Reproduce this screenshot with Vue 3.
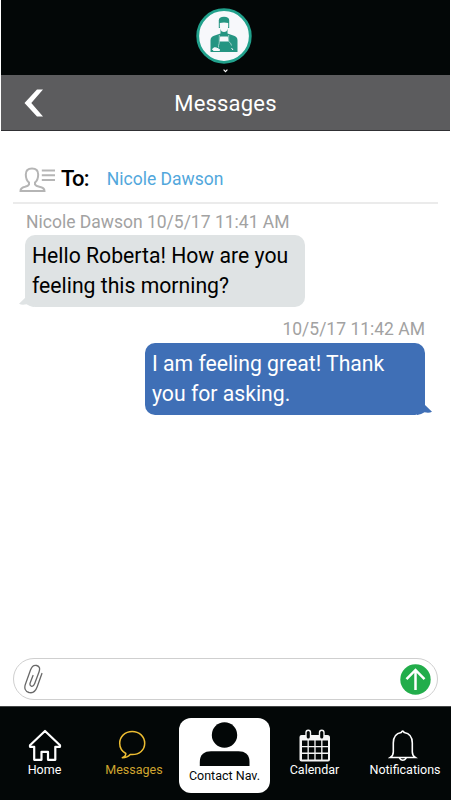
<!--
  MessagesScreen: one conversation thread with the recipient row,
  chat bubbles, the composer and the bottom tab bar.
-->
<script setup>
import { ref } from 'vue'

const recipient = 'Nicole Dawson'
const draft = ref('')

const messages = [
  { id: 1, mine: false, meta: 'Nicole Dawson 10/5/17 11:41 AM', lines: ['Hello Roberta! How are you', 'feeling this morning?'] },
  { id: 2, mine: true, meta: '10/5/17 11:42 AM', lines: ['I am feeling great! Thank', 'you for asking.'] },
]
</script>

<template>
  <div class="screen">
    <header class="top">
      <svg class="avatar" width="56" height="56" viewBox="0 0 56 56">
        <circle cx="28" cy="28" r="26.3" fill="#f7f8fb" stroke="#21a18c" stroke-width="2.8" />
        <path d="M14.500 44V32.500q0-3.500 3.500-4.700l6.500-2.300V20.500h7v5l6.500 2.300q3.500 1.200 3.500 4.700V44z" fill="#259582" />
        <path d="M22.800 20v-7.500q0-3.700 5.200-3.700t5.200 3.700V20z" fill="#259582" />
        <path d="M23.800 15q4.200-1.200 8.400 0v3.500q0 3-1.700 4.700-2.500 1.500-5 0-1.700-1.700-1.700-4.700z" fill="#f7f8fb" />
        <path d="M24.200 28.500h7.600l.7 5h-9z" fill="#f7f8fb" />
        <path d="M23.300 27v6.500q0 2-.8 4v2M32.700 27v6.500q2.500 1.500 2.800 4" fill="none" stroke="#b9ddd7" stroke-width=".8" />
        <path d="M16.500 41q1.500-2 4-1l3 1.500v1h-6zM35.500 40l1.500 2" fill="#f7f8fb" stroke="#f7f8fb" stroke-width="1" />
      </svg>
      <svg class="caret" width="5" height="4" viewBox="0 0 5 4">
        <path d="M.6.700l1.900 2L4.400.7" fill="none" stroke="#fff" stroke-width="1.100" />
      </svg>
    </header>

    <div class="title-bar">
      <svg class="back" width="21" height="28" viewBox="0 0 21 28">
        <path d="M14 .5H20L8.300 14 20 27.500H14L1.500 14z" fill="#fff" />
      </svg>
      <h1 class="title">Messages</h1>
    </div>

    <main class="thread">
      <div class="to-row">
        <svg class="contact" width="36" height="26" viewBox="0 0 36 26" fill="none" stroke="#b5b5b5" stroke-width="2">
          <path d="M10 17.500v-2C7.500 13.500 6.800 10.500 6.800 7.500c0-4.200 2.200-6 6.200-6s6.200 1.800 6.200 6c0 3-.7 6-3.200 8v2q1 1.600 4.300 2.300 5.200 1 5.200 4.200H1.500q0-3.200 4.500-4.200 3.200-.8 4-2.300z" />
          <path d="M22.800 3.500H36M22.800 8.300H36M22.800 13.100H36" />
        </svg>
        <span class="to-label">To:</span>
        <span class="to-name">{{ recipient }}</span>
      </div>

      <div
        v-for="m in messages"
        :key="m.id"
        class="message"
        :class="{ mine: m.mine }"
      >
        <p class="meta">{{ m.meta }}</p>
        <div class="bubble">
          <p v-for="line in m.lines" :key="line">{{ line }}</p>
          <svg class="tail" width="15" height="12" viewBox="0 0 15 12">
            <path d="M7 0V2L0 8.800q3 1.700 7.500.5 3 2 7.500 2.700V0z" />
          </svg>
        </div>
      </div>
    </main>

    <div class="composer">
      <svg class="clip" width="22" height="30" viewBox="0 0 22 30" fill="none" stroke="#686868" stroke-width="1.300" stroke-linecap="round">
        <path d="M17.900 9.500L13.300 22.500C11.500 27.500 8.500 29.500 5 28.500 1 27.500 0 24 1.500 20L6.500 6C7.800 2.300 10 .800 12.700 1.500c3 .8 3.500 3.200 2.300 6.500l-4.300 11.500c-.9 2.300-2.100 3.200-3.400 2.700-1.600-.6-1.600-2-1-3.700L9 11.500" />
      </svg>
      <input v-model="draft" class="field" type="text" aria-label="Message">
      <button class="send" type="button" aria-label="Send">
        <svg width="31" height="31" viewBox="0 0 31 31">
          <circle cx="15.500" cy="15.500" r="15.200" fill="#22ad4b" />
          <path d="M15.500 26V6M6.500 15.200l9-9.200 9 9.200" fill="none" stroke="#fff" stroke-width="2.500" />
        </svg>
      </button>
    </div>

    <nav class="tabs">
      <a class="tab home">
        <svg width="34" height="34" viewBox="0 0 34 34" fill="none" stroke="#fff" stroke-width="2.200" stroke-linejoin="round">
          <path d="M17 2L2 16.200v1.600h4.200v13h7.300v-8h6.500v8h7.300v-13H32v-1.600z" />
        </svg>
        <span>Home</span>
      </a>
      <a class="tab chat">
        <svg width="34" height="34" viewBox="0 0 34 34" fill="none" stroke="#edbd32" stroke-width="1.500" stroke-linejoin="round">
          <path d="M8.800 24.500C4.700 22.200 2.700 18.500 2.700 14.300 2.700 7.500 8 2.500 15.200 2.500S27.700 7.500 27.700 14.300 22.400 25.600 15.200 25.600q-1 0-2-.2Q10.500 28.600 5.300 28.700 9 27.300 8.800 24.500z" />
        </svg>
        <span>Messages</span>
      </a>
      <a class="tab contact-nav">
        <svg width="52" height="46" viewBox="0 0 52 46" fill="#030707">
          <circle cx="25.500" cy="13" r="12.700" />
          <path d="M.8 44v-4C.8 32.500 5.500 29.300 12 29.300h27.500c6.500 0 11 3.200 11 10.700v4z" />
        </svg>
        <span>Contact Nav.</span>
      </a>
      <a class="tab calendar">
        <svg width="34" height="34" viewBox="0 0 34 34">
          <path d="M3.500 6h26q2.500 0 2.500 2.500v22q0 2-2 2H3.500q-2 0-2-2V8q0-2 2-2z" fill="#f5f5f5" />
          <rect x="8" y="1.200" width="4.500" height="9" rx="2.200" fill="#030707" stroke="#f5f5f5" stroke-width="1.400" />
          <rect x="21.500" y="1.200" width="4.500" height="9" rx="2.200" fill="#030707" stroke="#f5f5f5" stroke-width="1.400" />
          <path d="M4 14.200h26M4 20.900h26M4 27.700h26" fill="none" stroke="#030707" stroke-width="5.400" stroke-dasharray="5.500 1.330" />
        </svg>
        <span>Calendar</span>
      </a>
      <a class="tab bell">
        <svg width="34" height="34" viewBox="0 0 34 34" fill="none" stroke="#fff" stroke-width="1.600">
          <path d="M13.200 3.500q1.500-2.700 3 0C22 4.500 24.300 8.500 24.300 14v9q0 3.500 3 5.500H2.300q3-2 3-5.500v-9C5.300 8.500 7.500 4.500 13.200 3.500z" />
          <path d="M11.300 29q3.500 4.500 7 0" />
        </svg>
        <span>Notifications</span>
      </a>
    </nav>
  </div>
</template>

<style>
body {
  margin: 0;
  background: #fff;
}
</style>

<style scoped>
.screen {
  display: flex;
  flex-direction: column;
  width: 451px;
  height: 800px;
  overflow: hidden;
  background: #fff;
  font-family: Roboto, "Liberation Sans", sans-serif;
}
p, h1 { margin: 0; }

.top {
  display: flex;
  flex-direction: column;
  align-items: center;
  box-sizing: border-box;
  height: 75px;
  margin: 0 1px;
  padding: 8px 3px 0 0;
  background: #030707;
}
.avatar { flex-shrink: 0; }
.caret { margin: 5px 0 0 3px; }

.title-bar {
  display: grid;
  grid-template-columns: 1fr auto 1fr;
  align-items: center;
  box-sizing: border-box;
  height: 56px;
  margin: 0 1px;
  border-bottom: 1px solid #303034;
  background: #5c5c5e;
}
.back { margin-left: 22px; }
.title {
  color: #fff;
  font-size: 22px;
  font-weight: 400;
  line-height: 28px;
  letter-spacing: 0.2px;
  margin-top: 2px;
}

.thread {
  flex: 1;
  padding: 26px 13px 0;
}
.to-row {
  display: flex;
  align-items: center;
  height: 45px;
  padding-left: 6px;
  border-bottom: 2px solid #ebebeb;
}
.contact { margin-top: 1px; }
.to-label {
  margin: -2px 0 0 6px;
  color: #000;
  font-size: 22px;
  font-weight: 500;
  letter-spacing: -0.8px;
}
.to-name {
  margin: -1px 0 0 18px;
  color: #52a7dc;
  font-size: 17.5px;
}

.message {
  display: flex;
  flex-direction: column;
  align-items: flex-start;
  padding: 7px 13px 0 12px;
}
.message.mine {
  align-items: flex-end;
  padding-top: 11px;
}
.meta {
  padding-left: 1px;
  color: #a2a2a2;
  font-size: 17.5px;
  line-height: 22px;
  margin-bottom: 2px;
}
.mine .meta { margin-bottom: 3px; }
.bubble {
  position: relative;
  box-sizing: border-box;
  width: 280px;
  height: 72px;
  padding: 6px 7px;
  border-radius: 10px;
  background: #dfe3e4;
  color: #000;
  font-size: 21.2px;
  line-height: 30px;
  white-space: nowrap;
}
.mine .bubble {
  background: #3f6fb6;
  color: #fff;
}
.tail {
  position: absolute;
  left: -6px;
  bottom: 0;
  fill: #dfe3e4;
}
.mine .tail {
  left: auto;
  right: -7px;
  transform: scaleX(-1);
  fill: #3f6fb6;
}

.composer {
  display: flex;
  align-items: center;
  box-sizing: border-box;
  height: 42px;
  margin: 0 13px 6px;
  padding: 0 6px 0 10px;
  border: 1px solid #cfcfcf;
  border-radius: 22px;
}
.field {
  flex: 1;
  min-width: 0;
  border: 0;
  outline: 0;
  background: none;
  font: inherit;
}
.send {
  display: flex;
  padding: 0;
  border: 0;
  background: none;
}

.tabs {
  display: grid;
  grid-template-columns: 89px 90px 91px 89px 92px;
  box-sizing: border-box;
  height: 94px;
  border-top: 1px solid #454747;
  background: #030707;
}
.tab {
  display: flex;
  flex-direction: column;
  align-items: center;
  padding-top: 22px;
  color: #fff;
  font-size: 12.5px;
  line-height: 14px;
  white-space: nowrap;
}
.chat { color: #d0a52f; }
.contact-nav {
  height: 75px;
  margin-top: 11px;
  padding-top: 4px;
  box-sizing: border-box;
  border-radius: 12px;
  background: #fff;
  color: #030707;
}
.contact-nav span { margin-top: 1px; }
</style>
